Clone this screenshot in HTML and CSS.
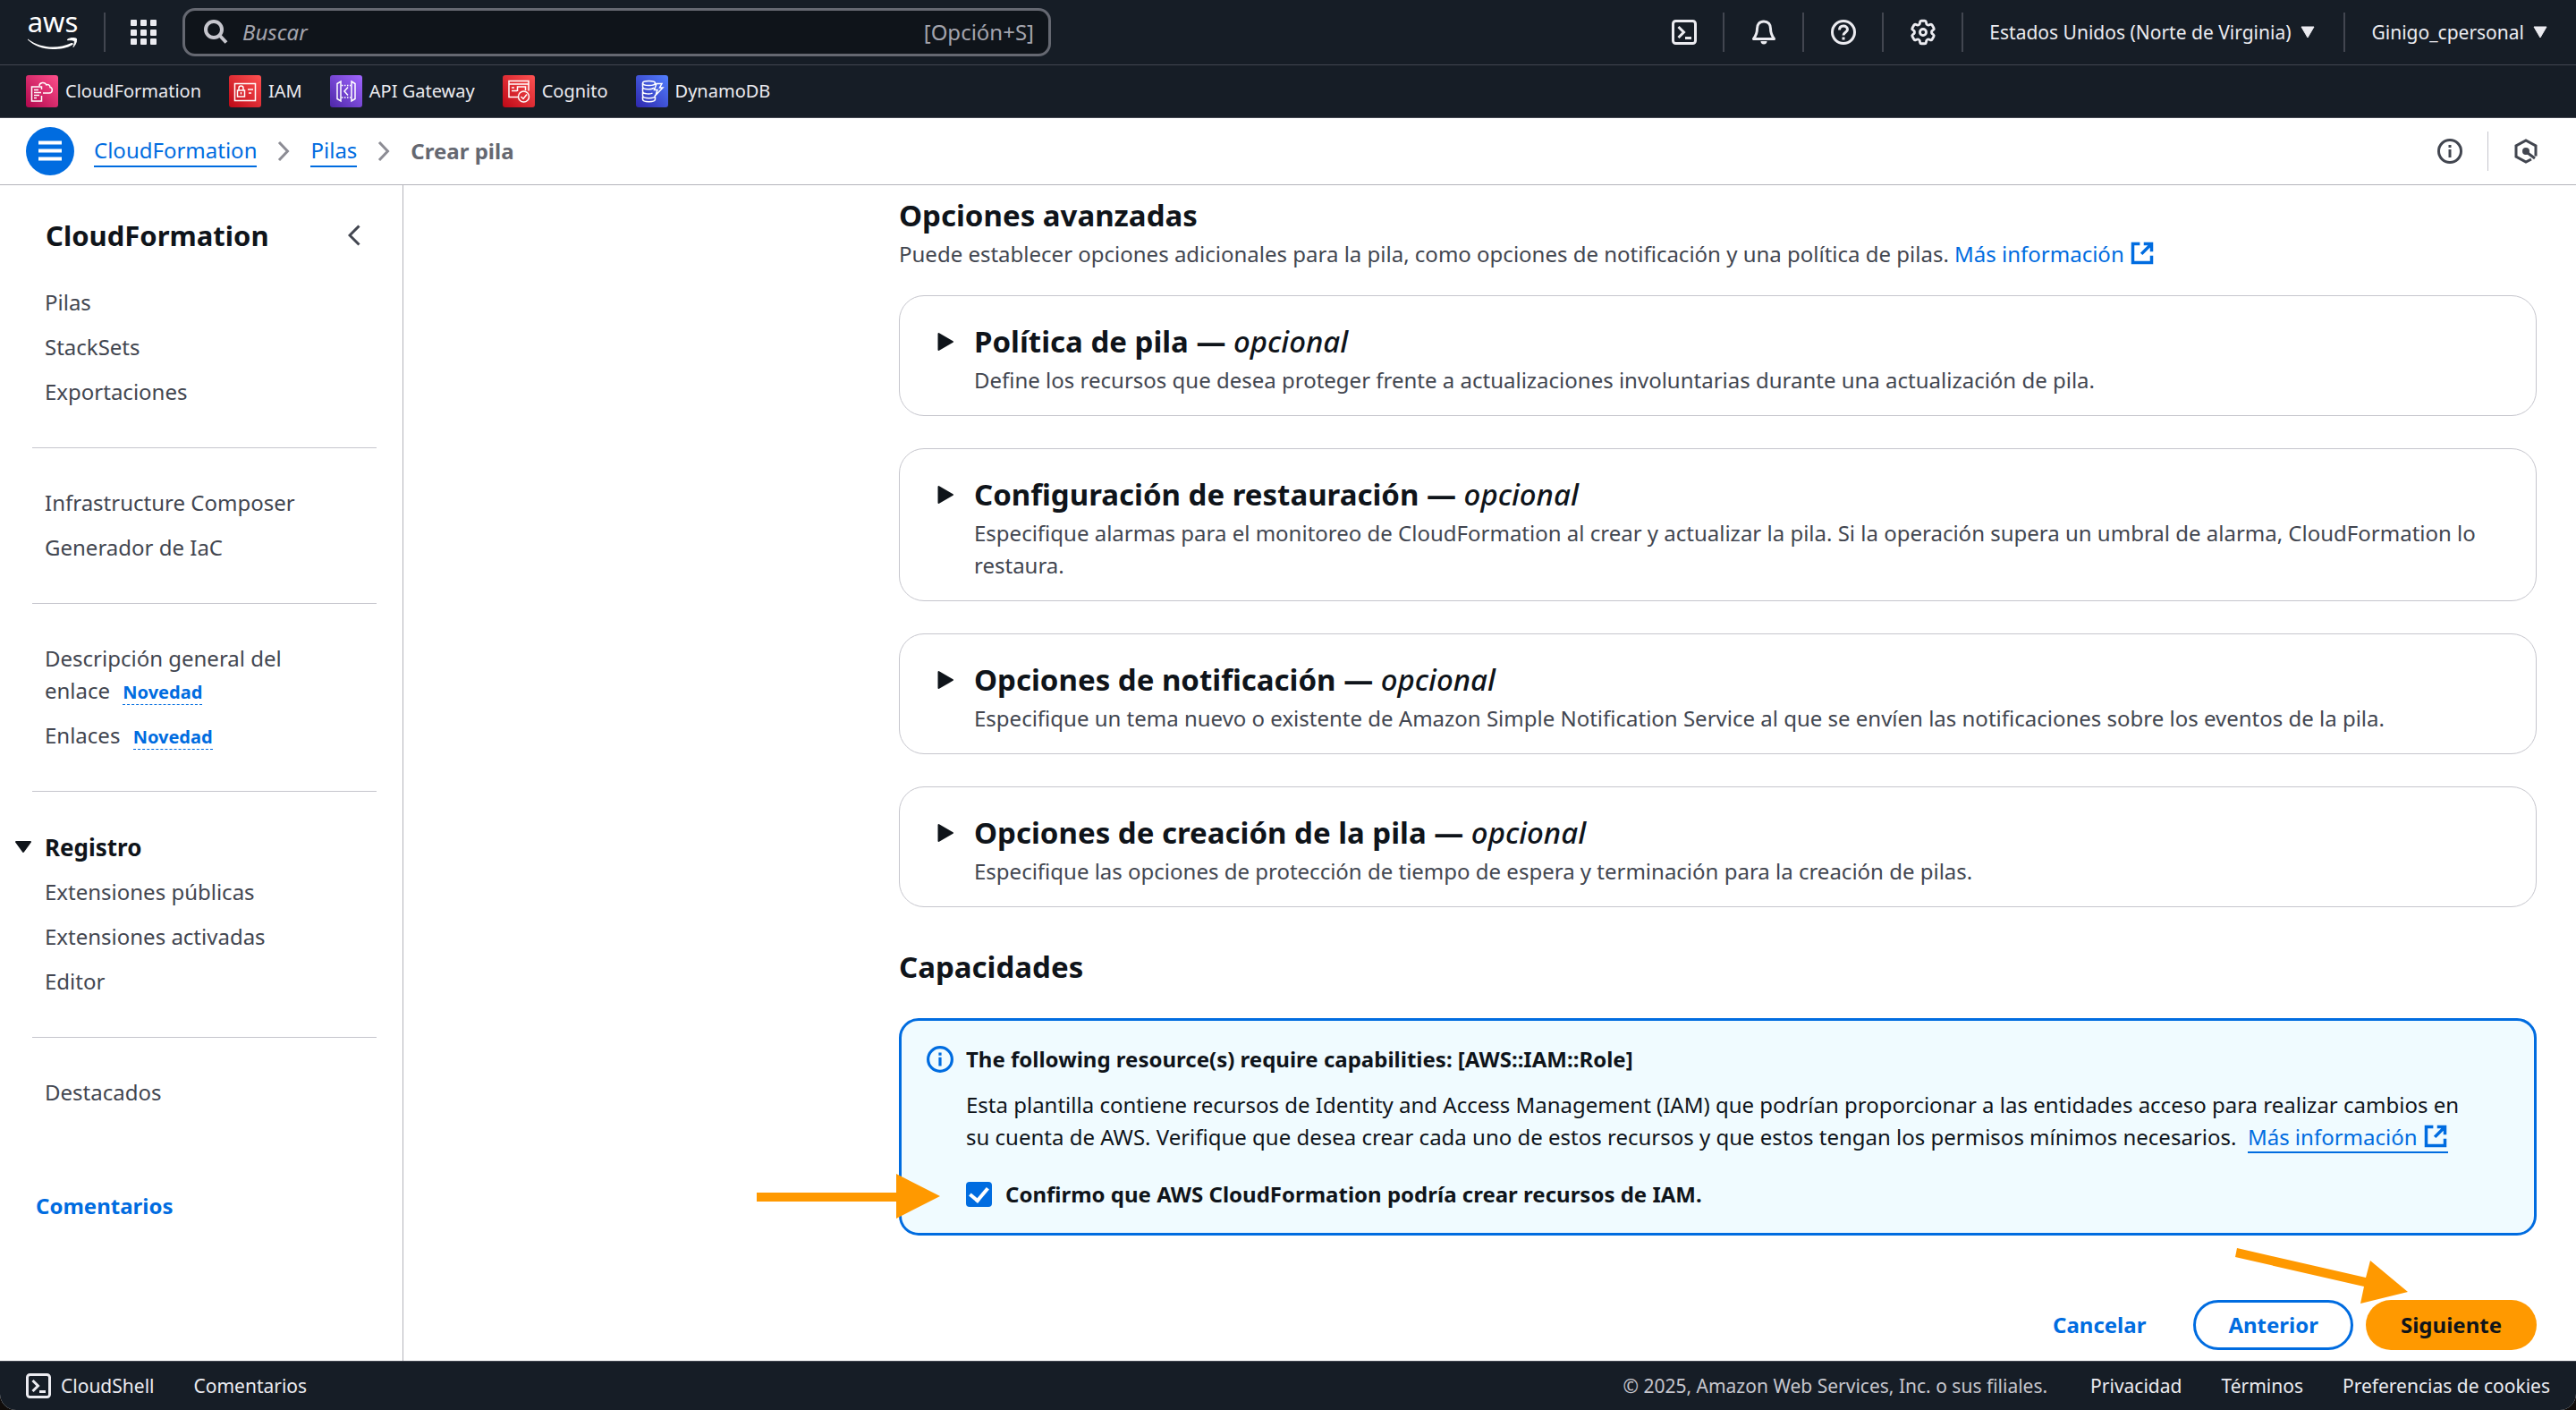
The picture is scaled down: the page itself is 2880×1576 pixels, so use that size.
FILE: index.html
```html
<!DOCTYPE html>
<html lang="es">
<head>
<meta charset="utf-8">
<title>CloudFormation - Crear pila</title>
<link rel="stylesheet" href="styles.css">
</head>
<body>
<svg class="sprite" aria-hidden="true">
  <symbol id="i-external" viewBox="0 0 16 16"><path d="M6.500 2H2v12h12V9.500M9 2h5v5M14 2 7.500 8.500" fill="none" stroke="currentColor" stroke-width="2"/></symbol>
  <symbol id="i-shell" viewBox="0 0 28 28"><rect x="1.500" y="1.500" width="25" height="25" rx="3" fill="none" stroke="currentColor" stroke-width="3"/><path d="m7.500 8 6 6-6 6M15 20.500h7" fill="none" stroke="currentColor" stroke-width="3"/></symbol>
  <symbol id="i-info" viewBox="0 0 28 28"><circle cx="14" cy="14" r="12.500" fill="none" stroke="currentColor" stroke-width="3"/><path d="M12.500 7h3v3h-3zM12.500 12h3v9h-3z" fill="currentColor"/></symbol>
  <symbol id="i-down" viewBox="0 0 16 14"><path d="M1 1h14L8 13z" fill="currentColor" stroke="currentColor" stroke-linejoin="round"/></symbol>
  <symbol id="i-chevron" viewBox="0 0 14 24"><path d="m2 2 9.500 10L2 22" fill="none" stroke="currentColor" stroke-width="3"/></symbol>
</svg>

<header class="topbar">
  <div class="topbar-main">
    <a class="logo" href="#" aria-label="AWS">
      <span class="logo-text">aws</span>
      <svg class="logo-smile" viewBox="0 0 56 13"><path d="M0 1.500C9 8 18 10.500 28 10.500c7 0 14-1.500 21-4.500 1.500-.5 2.500 1 1.200 2C44 12 36 13 28 13 17 13 7 9 0 2.500z" fill="currentColor"/><path d="M44.500 2c3.500-2 8-2 10-.7C55 4 53.500 8 51 10.500c1-3 1.700-5.500 1.200-7C50 2.600 47.500 2.500 44.500 2.800z" fill="currentColor" stroke="currentColor"/></svg>
    </a>
    <span class="vline"></span>
    <button class="icon-btn apps" aria-label="Servicios">
      <svg width="29" height="28" viewBox="0 0 29 28" fill="currentColor"><rect width="7" height="7" rx="1"/><rect x="11" width="7" height="7" rx="1"/><rect x="22" width="7" height="7" rx="1"/><rect y="11" width="7" height="7" rx="1"/><rect x="11" y="11" width="7" height="7" rx="1"/><rect x="22" y="11" width="7" height="7" rx="1"/><rect y="21" width="7" height="7" rx="1"/><rect x="11" y="21" width="7" height="7" rx="1"/><rect x="22" y="21" width="7" height="7" rx="1"/></svg>
    </button>
    <label class="search">
      <svg width="27" height="28" viewBox="0 0 27 28" fill="none" stroke="currentColor" stroke-width="4"><circle cx="11" cy="11" r="9"/><path d="m17 17 8 8.500"/></svg>
      <input type="search" placeholder="Buscar" aria-label="Buscar">
      <span class="hint">[Opción+S]</span>
    </label>
    <div class="tools">
      <button class="icon-btn tool" aria-label="CloudShell"><svg width="28" height="28"><use href="#i-shell"/></svg></button>
      <button class="icon-btn tool" aria-label="Notificaciones"><svg width="28" height="28" viewBox="0 0 28 28"><path d="M14 2c-5 0-7.500 3.500-7.500 8 0 5-1 7.500-4 11.500h23c-3-4-4-6.500-4-11.500 0-4.500-2.500-8-7.500-8z" fill="none" stroke="currentColor" stroke-width="3" stroke-linejoin="round"/><path d="M10.500 24h7a3.500 3.500 0 0 1-7 0z" fill="currentColor"/></svg></button>
      <button class="icon-btn tool" aria-label="Ayuda"><svg width="28" height="28" viewBox="0 0 28 28" fill="none" stroke="currentColor" stroke-width="3"><circle cx="14" cy="14" r="12.500"/><path d="M9.500 11.500c0-3 2-4.500 4.500-4.500s4.500 1.500 4.500 4c0 3-4.500 3-4.500 6.500M14 19.500v3"/></svg></button>
      <button class="icon-btn tool" aria-label="Ajustes"><svg width="34" height="34" viewBox="0 0 24 24" fill="none" stroke="currentColor" stroke-width="2"><path d="M9.594 3.940c.09-.542.56-.94 1.110-.94h2.593c.55 0 1.020.398 1.110.94l.213 1.281c.063.374.313.686.645.87.074.04.147.083.22.127.325.196.72.257 1.075.124l1.217-.456a1.125 1.125 0 0 1 1.370.49l1.296 2.247a1.125 1.125 0 0 1-.26 1.431l-1.003.827c-.293.241-.438.613-.43.992a7.723 7.723 0 0 1 0 .255c-.008.378.137.75.43.991l1.004.827c.424.35.534.955.26 1.430l-1.298 2.247a1.125 1.125 0 0 1-1.369.491l-1.217-.456c-.355-.133-.75-.072-1.076.124a6.470 6.470 0 0 1-.22.128c-.331.183-.581.495-.644.869l-.213 1.281c-.09.543-.56.94-1.110.94h-2.594c-.55 0-1.019-.398-1.110-.94l-.213-1.281c-.062-.374-.312-.686-.644-.87a6.520 6.520 0 0 1-.22-.127c-.325-.196-.72-.257-1.076-.124l-1.217.456a1.125 1.125 0 0 1-1.369-.49l-1.297-2.247a1.125 1.125 0 0 1 .26-1.431l1.004-.827c.292-.24.437-.613.43-.991a6.932 6.932 0 0 1 0-.255c.007-.38-.138-.751-.43-.992l-1.004-.827a1.125 1.125 0 0 1-.26-1.430l1.297-2.247a1.125 1.125 0 0 1 1.370-.491l1.216.456c.356.133.751.072 1.076-.124.072-.044.146-.086.22-.128.332-.183.582-.495.644-.869l.214-1.280Z"/><circle cx="12" cy="12" r="2.500"/></svg></button>
      <button class="icon-btn menu region">Estados Unidos (Norte de Virginia) <svg width="16" height="14"><use href="#i-down"/></svg></button>
      <button class="icon-btn menu user">Ginigo_cpersonal <svg width="16" height="14"><use href="#i-down"/></svg></button>
    </div>
  </div>
  <nav class="favorites" aria-label="Favoritos">
    <a href="#"><svg class="svc" viewBox="0 0 36 36"><defs><linearGradient id="g-pink" x1="0" y1="1" x2="1" y2="0"><stop offset="0" stop-color="#b0084d"/><stop offset="1" stop-color="#ff4f8b"/></linearGradient></defs><rect width="36" height="36" rx="3" fill="url(#g-pink)"/><path d="M17.500 23v6h-11V13H17.500v3M9 16.500h5M9 19.500h8M9 22.500h6M9 25.500h3M15 12c0-4 6-5 8-1 1.500-1 4 0 4 2.500 3 0 3.500 6.500-1 6.500h-7" fill="none" stroke="#fff" stroke-width="1.500"/></svg>CloudFormation</a>
    <a href="#"><svg class="svc" viewBox="0 0 36 36"><defs><linearGradient id="g-red" x1="0" y1="1" x2="1" y2="0"><stop offset="0" stop-color="#bd0816"/><stop offset="1" stop-color="#ff5252"/></linearGradient></defs><rect width="36" height="36" rx="3" fill="url(#g-red)"/><path d="M6.500 9.500h23v19h-23zM9.500 17h8v7h-8zM11 17v-2.500a2.500 2.500 0 0 1 5 0V17M13.500 19v2.500M21 16h6M22 20h3" fill="none" stroke="#fff" stroke-width="1.500"/></svg>IAM</a>
    <a href="#"><svg class="svc" viewBox="0 0 36 36"><defs><linearGradient id="g-purple" x1="0" y1="1" x2="1" y2="0"><stop offset="0" stop-color="#4d27a8"/><stop offset="1" stop-color="#a166ff"/></linearGradient></defs><rect width="36" height="36" rx="3" fill="url(#g-purple)"/><path d="M8 9.500 12 7v22l-4-2.500zM24 7l4 2.500v17L24 29zM20 13.500l-4 4.500 4 4.500" fill="none" stroke="#fff" stroke-width="1.500"/><path d="M13 11.500h10M13 25h10" stroke="#fff" stroke-width="1.500" stroke-dasharray="1.500 1.500"/></svg>API Gateway</a>
    <a href="#"><svg class="svc" viewBox="0 0 36 36"><rect width="36" height="36" rx="3" fill="url(#g-red)"/><path d="M17 24.500H7v-18h22v11M7 10h22M10 14h3M10 17.500h6M16.500 18v-5h9v4" fill="none" stroke="#fff" stroke-width="1.500"/><circle cx="23.500" cy="24" r="6" fill="none" stroke="#fff" stroke-width="1.500"/><path d="m20.500 24 2.500 2.500 4-5" fill="none" stroke="#fff" stroke-width="1.500"/></svg>Cognito</a>
    <a href="#"><svg class="svc" viewBox="0 0 36 36"><defs><linearGradient id="g-blue" x1="0" y1="1" x2="1" y2="0"><stop offset="0" stop-color="#2e27ad"/><stop offset="1" stop-color="#527fff"/></linearGradient></defs><rect width="36" height="36" rx="3" fill="url(#g-blue)"/><g fill="none" stroke="#fff" stroke-width="1.500"><ellipse cx="14.500" cy="9" rx="7" ry="2.500"/><path d="M7.500 9v4c0 3.500 11 3.500 12.500 1M21.500 9v2M7.500 14v4c0 3.500 9 3.500 11 2M7.500 19v4c0 3.500 14 3.500 14 0v-1M7.500 24v3c0 3.500 14 3.500 14 0v-3M23 9.500h6L26.500 14H30l-8 8.500 2-6h-3.500z"/></g></svg>DynamoDB</a>
  </nav>
</header>

<div class="crumbbar">
  <button class="burger" aria-label="Abrir navegación"><svg width="26" height="24" viewBox="0 0 26 24"><path d="M0 2.500h26M0 11.500h26M0 20.500h26" stroke="currentColor" stroke-width="4"/></svg></button>
  <nav class="crumbs" aria-label="Ruta">
    <a href="#">CloudFormation</a>
    <svg width="14" height="24"><use href="#i-chevron"/></svg>
    <a href="#">Pilas</a>
    <svg width="14" height="24"><use href="#i-chevron"/></svg>
    <span class="current">Crear pila</span>
  </nav>
  <div class="crumb-tools">
    <button class="icon-btn" aria-label="Información"><svg width="28" height="28"><use href="#i-info"/></svg></button>
    <span class="vline light"></span>
    <button class="icon-btn" aria-label="Asistente"><svg width="28" height="28" viewBox="0 0 28 28" fill="none" stroke="currentColor" stroke-width="3"><path d="M20 23l-6 3L3 20V8l11-6 11 6v11.500"/><path d="m16 16 8 6"/><circle cx="14" cy="14" r="2.500" fill="currentColor"/></svg></button>
  </div>
</div>

<div class="layout">
  <aside class="side">
    <div class="side-head">
      <h2>CloudFormation</h2>
      <button class="icon-btn" aria-label="Cerrar navegación"><svg width="14" height="24" viewBox="0 0 14 24"><path d="M12.500 1.500 2 12l10.500 10.500" fill="none" stroke="currentColor" stroke-width="3"/></svg></button>
    </div>
    <ul>
      <li><a href="#">Pilas</a></li>
      <li><a href="#">StackSets</a></li>
      <li><a href="#">Exportaciones</a></li>
    </ul>
    <hr>
    <ul>
      <li><a href="#">Infrastructure Composer</a></li>
      <li><a href="#">Generador de IaC</a></li>
    </ul>
    <hr>
    <ul>
      <li><a href="#">Descripción general del enlace</a> <button class="badge">Novedad</button></li>
      <li><a href="#">Enlaces</a> <button class="badge">Novedad</button></li>
    </ul>
    <hr>
    <ul>
      <li class="group"><button class="group-btn"><svg width="20" height="16" viewBox="0 0 20 16"><path d="M2 2h16l-8 11z" fill="currentColor" stroke="currentColor" stroke-width="2" stroke-linejoin="round"/></svg>Registro</button></li>
      <li><a href="#">Extensiones públicas</a></li>
      <li><a href="#">Extensiones activadas</a></li>
      <li><a href="#">Editor</a></li>
    </ul>
    <hr>
    <ul>
      <li><a href="#">Destacados</a></li>
    </ul>
    <a class="feedback" href="#">Comentarios</a>
  </aside>

  <main class="content">
    <section>
      <h2>Opciones avanzadas</h2>
      <p class="desc">Puede establecer opciones adicionales para la pila, como opciones de notificación y una política de pilas. <a href="#">Más información <svg class="ext"><use href="#i-external"/></svg></a></p>
      <div class="cards">
        <details class="card"><summary><svg class="tri" viewBox="0 0 18 22"><path d="M1.500 2v18L17 11z" fill="currentColor" stroke="currentColor" stroke-width="2" stroke-linejoin="round"/></svg><h2>Política de pila — <i>opcional</i></h2><p class="desc">Define los recursos que desea proteger frente a actualizaciones involuntarias durante una actualización de pila.</p></summary></details>
        <details class="card"><summary><svg class="tri" viewBox="0 0 18 22"><path d="M1.500 2v18L17 11z" fill="currentColor" stroke="currentColor" stroke-width="2" stroke-linejoin="round"/></svg><h2>Configuración de restauración — <i>opcional</i></h2><p class="desc">Especifique alarmas para el monitoreo de CloudFormation al crear y actualizar la pila. Si la operación supera un umbral de alarma, CloudFormation lo restaura.</p></summary></details>
        <details class="card"><summary><svg class="tri" viewBox="0 0 18 22"><path d="M1.500 2v18L17 11z" fill="currentColor" stroke="currentColor" stroke-width="2" stroke-linejoin="round"/></svg><h2>Opciones de notificación — <i>opcional</i></h2><p class="desc">Especifique un tema nuevo o existente de Amazon Simple Notification Service al que se envíen las notificaciones sobre los eventos de la pila.</p></summary></details>
        <details class="card"><summary><svg class="tri" viewBox="0 0 18 22"><path d="M1.500 2v18L17 11z" fill="currentColor" stroke="currentColor" stroke-width="2" stroke-linejoin="round"/></svg><h2>Opciones de creación de la pila — <i>opcional</i></h2><p class="desc">Especifique las opciones de protección de tiempo de espera y terminación para la creación de pilas.</p></summary></details>
      </div>
    </section>

    <section class="capabilities">
      <h2>Capacidades</h2>
      <div class="alert">
        <svg class="alert-icon" width="30" height="30"><use href="#i-info"/></svg>
        <div class="alert-body">
          <strong>The following resource(s) require capabilities: [AWS::IAM::Role]</strong>
          <p>Esta plantilla contiene recursos de Identity and Access Management (IAM) que podrían proporcionar a las entidades acceso para realizar cambios en su cuenta de AWS. Verifique que desea crear cada uno de estos recursos y que estos tengan los permisos mínimos necesarios. &nbsp;<a href="#">Más información <svg class="ext"><use href="#i-external"/></svg></a></p>
          <label class="confirm"><input type="checkbox" checked><span>Confirmo que AWS CloudFormation podría crear recursos de IAM.</span></label>
        </div>
        <svg class="pointer pointer-check" viewBox="0 0 205 50"><path d="M0 21h156V0l49 25-49 25V31H0z" fill="#f90"/></svg>
      </div>
    </section>

    <div class="actions">
      <button class="btn btn-link">Cancelar</button>
      <button class="btn btn-normal">Anterior</button>
      <button class="btn btn-primary">Siguiente</button>
      <svg class="pointer pointer-next" viewBox="0 0 193 62"><path d="M2 0 146 33l5-19 42 35-53 13 4-19L0 10z" fill="#f90"/></svg>
    </div>
  </main>
</div>

<footer class="footer">
  <button class="icon-btn shell"><svg width="28" height="28"><use href="#i-shell"/></svg>CloudShell</button>
  <a href="#">Comentarios</a>
  <span class="legal">© 2025, Amazon Web Services, Inc. o sus filiales.</span>
  <a href="#">Privacidad</a>
  <a href="#">Términos</a>
  <a href="#">Preferencias de cookies</a>
</footer>
</body>
</html>
```
FILE: styles.css
```css
* { box-sizing: border-box; }

:root {
  --ink: #0f141a;
  --text: #424650;
  --blue: #006ce0;
  --navy: #161d26;
  --line: #c6c6cd;
}

html { background: #100c0a; }

body {
  margin: 0;
  min-height: 100vh;
  display: flex;
  flex-direction: column;
  font: 24px/36px "Noto Sans", "Open Sans", sans-serif;
  color: var(--text);
  border-radius: 0 0 18px 18px;
  overflow: hidden;
  background: #fff;
}

button, input { font: inherit; color: inherit; }
button { background: none; border: 0; padding: 0; margin: 0; cursor: pointer; }
a { color: var(--blue); text-decoration: none; }
svg { flex: none; }
h2 { margin: 0; font-size: 33px; line-height: 44px; font-weight: 700; color: var(--ink); }
p { margin: 0; }
.sprite { position: absolute; width: 0; height: 0; }
.icon-btn { display: inline-flex; align-items: center; justify-content: center; }

.vline { width: 2px; height: 44px; background: #424650; }
.vline.light { width: 1px; background: var(--line); }

/* Top bar */
.topbar { background: var(--navy); color: #ebebf0; font-size: 21px; border-bottom: 1px solid #424650; }
.topbar-main { display: flex; align-items: center; height: 73px; padding: 0 32px 0 30px; border-bottom: 1px solid #424650; }
.logo { display: flex; flex-direction: column; align-items: center; width: 58px; color: #fff; }
.logo-text { font-size: 31px; line-height: 12px; height: 24px; }
.logo-smile { width: 56px; height: 13px; }
.topbar-main > .vline { margin: 0 28px; }
.search { display: flex; align-items: center; width: 971px; height: 54px; margin-left: 29px; padding: 0 16px 0 21px; border: 3px solid #656871; border-radius: 14px; background: #0f141a; color: #c6c6cd; font-size: 24px; }
.search input { flex: 1; min-width: 0; margin: 0 0 0 16px; padding: 0; background: none; border: 0; outline: 0; }
.search input::placeholder { color: #a4a4ad; opacity: 1; font-style: italic; }
.hint { color: #a4a4ad; }
.tools { display: flex; align-items: center; margin-left: auto; }
.tool { width: 89px; height: 44px; border-right: 2px solid #424650; }
.menu { gap: 10px; height: 44px; }
.region { padding: 0 32px 0 29px; border-right: 2px solid #424650; }
.user { padding-left: 30px; }
.favorites { display: flex; align-items: center; gap: 31px; height: 58px; padding: 0 29px; font-size: 20px; }
.favorites a { display: flex; align-items: center; gap: 8px; color: #ebebf0; }
.svc { width: 36px; height: 36px; }

/* Breadcrumb bar */
.crumbbar { display: flex; align-items: center; height: 75px; padding: 0 42px 0 29px; border-bottom: 1px solid #b4b4bb; }
.burger { display: flex; align-items: center; justify-content: center; width: 54px; height: 54px; border-radius: 50%; background: var(--blue); color: #fff; }
.crumbs { display: flex; align-items: center; gap: 23px; margin-left: 22px; color: #8c8c94; }
.crumbs a { line-height: 34px; border-bottom: 2px solid var(--blue); }
.current { font-weight: 700; color: #656871; }
.crumb-tools { display: flex; align-items: center; gap: 28px; margin-left: auto; }

/* Page */
.layout { flex: 1; display: flex; }
.side { width: 451px; flex: none; padding: 34px 29px 0 36px; border-right: 1px solid #b4b4bb; }
.side-head { display: flex; justify-content: space-between; padding: 0 18px 28px 15px; }
.side-head h2 { font-size: 31px; }
.side ul { list-style: none; margin: 0; padding: 0 60px 0 14px; }
.side li { padding: 7px 0; }
.side li a { color: var(--text); }
.side hr { margin: 37px 0 36px; border: 0; border-top: 1px solid var(--line); }
.badge { margin-left: 8px; font-size: 20px; line-height: 26px; font-weight: 700; color: var(--blue); border-bottom: 1px dashed var(--blue); }
.side .group { margin-left: -34px; padding-top: 8px; }
.group-btn { display: flex; align-items: center; gap: 14px; font-size: 26px; font-weight: 700; color: var(--ink); }
.feedback { display: block; margin: 84px 0 0 4px; font-weight: 700; }

.content { flex: 1; min-width: 0; padding: 12px 44px 12px 554px; }
.desc { margin-top: 3px; }
.ext { width: 28px; height: 28px; vertical-align: -4px; }
.cards { display: flex; flex-direction: column; gap: 36px; margin-top: 28px; }
.card { border: 1px solid var(--line); border-radius: 28px; }
.card summary { display: grid; grid-template-columns: 18px 1fr; column-gap: 23px; align-items: center; list-style: none; padding: 29px 36px 21px 42px; cursor: pointer; }
.card .desc { grid-column: 2; }
.card i { font-weight: 500; }
.tri { width: 18px; height: 22px; color: var(--ink); }

.capabilities { margin-top: 45px; }
.alert { position: relative; display: flex; gap: 14px; margin-top: 35px; padding: 25px 72px 25px 28px; border: 3px solid var(--blue); border-radius: 22px; background: #f0fbff; color: var(--ink); }
.alert-icon { margin-top: 3px; color: var(--blue); }
.alert strong { display: block; font-weight: 700; }
.alert p { margin: 15px 0 28px; }
.alert p a { border-bottom: 2px solid var(--blue); }
.confirm { display: flex; align-items: center; gap: 15px; font-weight: 700; }
.confirm input { appearance: none; display: grid; place-items: center; width: 29px; height: 28px; margin: 0; border-radius: 4px; background: var(--blue); }
.confirm input:checked::before { content: ""; width: 9px; height: 16px; margin-bottom: 4px; border: solid #fff; border-width: 0 4px 4px 0; transform: rotate(40deg); }

.actions { position: relative; display: flex; justify-content: flex-end; gap: 14px; margin-top: 72px; }
.btn { height: 56px; padding: 0 36px; border: 3px solid transparent; border-radius: 28px; font-weight: 700; line-height: 36px; }
.btn-link { color: var(--blue); }
.btn-normal { color: var(--blue); border-color: var(--blue); }
.btn-primary { color: var(--ink); background: #f90; }

.pointer { position: absolute; }
.pointer-check { left: -162px; top: 171px; width: 205px; height: 50px; }
.pointer-next { right: 144px; top: -58px; width: 193px; height: 62px; }

/* Footer */
.footer { display: flex; align-items: center; gap: 44px; height: 55px; padding: 0 29px; border-top: 1px solid #424650; background: var(--navy); color: #ebebf0; font-size: 21px; }
.footer a { color: #ebebf0; }
.shell { gap: 11px; }
.legal { margin: 0 4px 0 auto; color: #c6c6cd; }
```
